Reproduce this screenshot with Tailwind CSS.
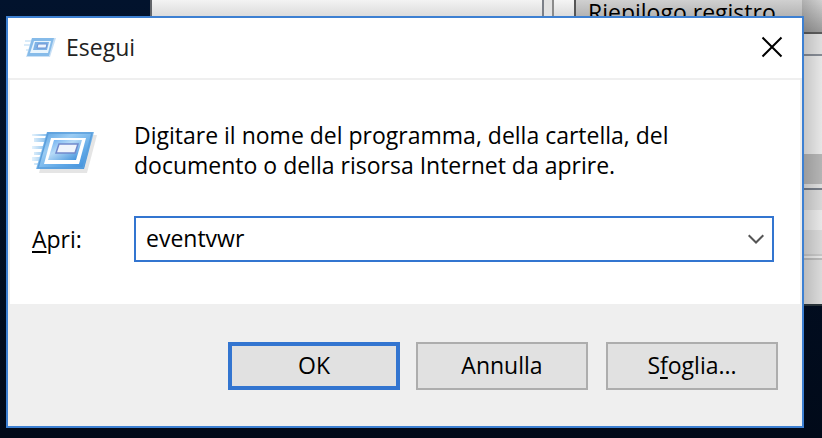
<!DOCTYPE html>
<html lang="it">
<head>
<meta charset="utf-8">
<meta name="viewport" content="width=device-width, initial-scale=1">
<title>Esegui</title>
<script src="https://cdn.jsdelivr.net/npm/@tailwindcss/browser@4"></script>
</head>
<body class="relative min-h-screen overflow-hidden bg-linear-to-b from-[#02132d] to-[#010a19] font-['Open_Sans','Noto_Sans',sans-serif] text-[23px] leading-[30px] text-black">

<!-- Window behind the dialog -->
<div class="ml-[150px] flex border-l-2 border-b-2 border-l-[#62656a] border-b-[#283238]" aria-hidden="true">
  <div class="w-[392px] shrink-0 border-r-2 border-[#7b7f88] bg-linear-to-b from-[#f3f3f3] to-[#dcdcdc] to-[16px]"></div>
  <div class="w-2.5 shrink-0 border-r-2 border-[#8b8b8b] bg-[#e2e2e2]"></div>
  <div class="w-[22px] shrink-0 border-r-2 border-[#555] bg-linear-to-b from-[#f4f4f4] to-[#dcdcdc] to-[16px]"></div>
  <div class="relative min-w-0 flex-1">
    <div class="h-[34px] overflow-hidden border-b-2 border-[#5b5b5b] bg-linear-to-b from-[#d0d0d0] to-[#999] pl-3 leading-6 whitespace-nowrap">Riepilogo registro</div>
    <div class="h-[22px] border-b-2 border-[#858b94] bg-[#dedede]"></div>
    <div class="h-[98px] bg-[#e6e6e6]"></div>
    <div class="h-[30px] bg-[#b4b4b4]"></div>
    <div class="h-1.5 border-b-2 border-[#767c87] bg-[#dedede]"></div>
    <div class="h-5 bg-[#d7d7d7]"></div>
    <div class="h-5 bg-[#e7e7e7]"></div>
    <div class="h-[26px] border-b-2 border-[#c6c6c6] bg-[#d7d7d7]"></div>
    <div class="h-1 border-b-2 border-[#b9b9b9] bg-[#e6e6e6]"></div>
    <div class="h-11 bg-[#dadada]"></div>
    <div class="absolute inset-y-0 right-0 w-5 bg-linear-to-r from-black/15 to-transparent"></div>
  </div>
</div>

<!-- Run dialog -->
<main role="dialog" aria-labelledby="title" class="absolute top-4 right-[18px] left-1.5 border-2 border-[#3d80d2] bg-[#efefef]">
  <svg class="absolute size-0" aria-hidden="true">
    <defs>
      <linearGradient id="frame" x1="0" y1="0" x2="1" y2="1">
        <stop offset="0" stop-color="#4f9be0"/><stop offset=".35" stop-color="#9bccf3"/><stop offset=".65" stop-color="#62aae8"/><stop offset="1" stop-color="#3889d8"/>
      </linearGradient>
      <linearGradient id="panel" x1="0" y1="0" x2="1" y2="1">
        <stop offset="0" stop-color="#65aaf0"/><stop offset=".4" stop-color="#b6daf7"/><stop offset="1" stop-color="#3388d8"/>
      </linearGradient>
      <linearGradient id="trail" gradientUnits="userSpaceOnUse" x1="0" y1="0" x2="16" y2="0">
        <stop offset="0" stop-color="#e4f2fc"/><stop offset="1" stop-color="#83bceb"/>
      </linearGradient>
    </defs>
  </svg>
  <header class="flex h-[62px] items-center border-b-2 border-[#efefef] bg-white pr-[19px] pb-0.5 pl-4">
    <svg class="h-6 w-8" viewBox="0 0 32 24" aria-hidden="true">
      <path d="M1 5h8v2H1zM0 9h7v2H0zM2 14h5v2H2z" fill="#d9ebf9"/>
      <path d="M8 3h24l-6 19H2z" fill="#c9e0f5"/>
      <path d="M8 3h22l-5 18H3z" fill="#86bbe9"/>
      <path d="M10 6h17l-3 12H6z" fill="#e9f5fd"/>
      <path d="M11 7h14l-2 8H9z" fill="#7fb3e6"/>
      <path d="M14 9h9l-1 4h-9z" fill="#edf5fd" stroke="#6c92d3"/>
    </svg>
    <h1 id="title" class="ml-2.5 flex-1 text-[#222]">Esegui</h1>
    <button type="button" aria-label="Chiudi" class="grid size-[22px] place-items-center">
      <svg class="size-[22px]" viewBox="0 0 22 22" fill="none" stroke="#000" stroke-width="2" aria-hidden="true"><path d="M1.500 1.500 20.500 20.500M20.500 1.500 1.500 20.500"/></svg>
    </button>
  </header>

  <form>
    <div class="mx-0.5 bg-white pt-10 pr-[26px] pb-[42px] pl-[22px]">
      <div class="flex">
        <svg class="mt-1.5 h-[54px] w-[66px] shrink-0" viewBox="0 0 66 54" aria-hidden="true">
          <path d="M17 9h48l-10 38H7z" fill="#000" opacity=".1"/>
          <path d="M0 8h16v2H0zM2 12h12v4H2zM0 20h14v3H0zM2 26h10v3H2zM0 31h10v4H0zM2 37h8v2H2z" fill="url(#trail)"/>
          <path d="M15 6h47l-10 37H4z" fill="url(#frame)"/>
          <path d="M16 7h44l-9 35H6z" fill="none" stroke="#5b9fdc" stroke-width="1.500"/>
          <path d="M19 12h35l-7 26H12z" fill="#fff"/>
          <path d="M22 14h28l-6 20H16z" fill="url(#panel)"/>
          <path d="M27 18h19l-3 9H24z" fill="#f0f4fc" stroke="#7189cc" stroke-width="1.500"/>
        </svg>
        <p class="ml-9 max-w-[560px]">Digitare il nome del programma, della cartella, del documento o della risorsa Internet da aprire.</p>
      </div>
      <div class="mt-[36px] flex items-center">
        <label for="open" class="w-[102px] shrink-0"><span class="underline decoration-2 underline-offset-3">A</span>pri:</label>
        <div class="flex h-[46px] min-w-0 flex-1 items-center border-2 border-[#3375d0] bg-white">
          <input id="open" type="text" value="eventvwr" class="h-full min-w-0 flex-1 bg-transparent px-2.5 pb-0.5 outline-none">
          <button type="button" aria-label="Mostra elenco" class="grid h-full w-8 place-items-center">
            <svg class="h-2.5 w-4" viewBox="0 0 16 10" fill="none" stroke="#555" stroke-width="2" aria-hidden="true"><path d="M.7 1.200 8 8.500l7.300-7.300"/></svg>
          </button>
        </div>
      </div>
    </div>

    <footer class="flex justify-end gap-4 pt-[38px] pr-6 pb-9">
      <button type="button" class="h-12 w-[172px] border-4 border-[#3375d0] bg-[#e1e1e1] pb-0.5">OK</button>
      <button type="button" class="mr-0.5 h-12 w-[172px] border-2 border-[#adadad] bg-[#e1e1e1] pb-0.5">Annulla</button>
      <button type="button" class="h-12 w-[172px] border-2 border-[#adadad] bg-[#e1e1e1] pb-0.5">S<span class="underline decoration-2 underline-offset-3">f</span>oglia...</button>
    </footer>
  </form>
</main>
</body>
</html>
